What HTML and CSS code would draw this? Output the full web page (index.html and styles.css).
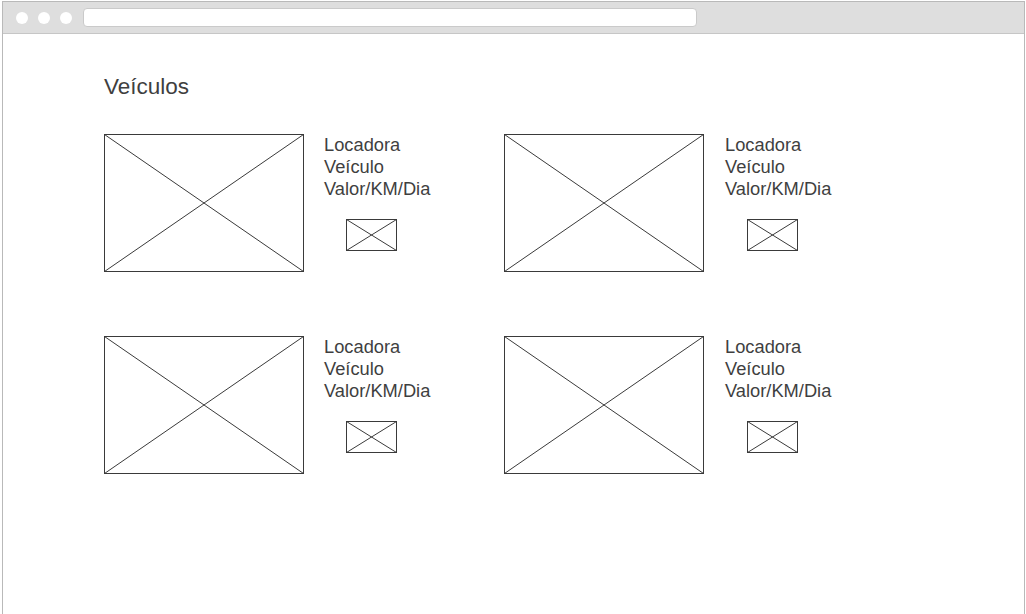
FILE: index.html
```html
<!DOCTYPE html>
<html lang="pt">
<head>
<meta charset="utf-8">
<title>Veículos</title>
<link rel="stylesheet" href="styles.css">
</head>
<body>
<div class="window">
  <div class="chrome">
    <span class="dot"></span><span class="dot"></span><span class="dot"></span>
    <div class="address"></div>
  </div>
  <main class="content">
    <h1 class="title">Veículos</h1>
    <div class="grid">
      <div class="card">
        <svg class="ph-big" width="200" height="138" viewBox="0 0 200 138"><rect x="0.5" y="0.5" width="199" height="137"/><line x1="0.5" y1="0.5" x2="199.5" y2="137.5"/><line x1="199.5" y1="0.5" x2="0.5" y2="137.5"/></svg>
        <div class="info">
          <div class="line">Locadora</div>
          <div class="line">Veículo</div>
          <div class="line">Valor/KM/Dia</div>
          <svg class="ph-small" width="51" height="32" viewBox="0 0 51 32"><rect x="0.5" y="0.5" width="50" height="31"/><line x1="0.5" y1="0.5" x2="50.5" y2="31.5"/><line x1="50.5" y1="0.5" x2="0.5" y2="31.5"/></svg>
        </div>
      </div>
      <div class="card card-right">
        <svg class="ph-big" width="200" height="138" viewBox="0 0 200 138"><rect x="0.5" y="0.5" width="199" height="137"/><line x1="0.5" y1="0.5" x2="199.5" y2="137.5"/><line x1="199.5" y1="0.5" x2="0.5" y2="137.5"/></svg>
        <div class="info">
          <div class="line">Locadora</div>
          <div class="line">Veículo</div>
          <div class="line">Valor/KM/Dia</div>
          <svg class="ph-small" width="51" height="32" viewBox="0 0 51 32"><rect x="0.5" y="0.5" width="50" height="31"/><line x1="0.5" y1="0.5" x2="50.5" y2="31.5"/><line x1="50.5" y1="0.5" x2="0.5" y2="31.5"/></svg>
        </div>
      </div>
      <div class="card">
        <svg class="ph-big" width="200" height="138" viewBox="0 0 200 138"><rect x="0.5" y="0.5" width="199" height="137"/><line x1="0.5" y1="0.5" x2="199.5" y2="137.5"/><line x1="199.5" y1="0.5" x2="0.5" y2="137.5"/></svg>
        <div class="info">
          <div class="line">Locadora</div>
          <div class="line">Veículo</div>
          <div class="line">Valor/KM/Dia</div>
          <svg class="ph-small" width="51" height="32" viewBox="0 0 51 32"><rect x="0.5" y="0.5" width="50" height="31"/><line x1="0.5" y1="0.5" x2="50.5" y2="31.5"/><line x1="50.5" y1="0.5" x2="0.5" y2="31.5"/></svg>
        </div>
      </div>
      <div class="card card-right">
        <svg class="ph-big" width="200" height="138" viewBox="0 0 200 138"><rect x="0.5" y="0.5" width="199" height="137"/><line x1="0.5" y1="0.5" x2="199.5" y2="137.5"/><line x1="199.5" y1="0.5" x2="0.5" y2="137.5"/></svg>
        <div class="info">
          <div class="line">Locadora</div>
          <div class="line">Veículo</div>
          <div class="line">Valor/KM/Dia</div>
          <svg class="ph-small" width="51" height="32" viewBox="0 0 51 32"><rect x="0.5" y="0.5" width="50" height="31"/><line x1="0.5" y1="0.5" x2="50.5" y2="31.5"/><line x1="50.5" y1="0.5" x2="0.5" y2="31.5"/></svg>
        </div>
      </div>
    </div>
  </main>
</div>
</body>
</html>
```

FILE: styles.css
```css
html, body {
  margin: 0;
  padding: 0;
  height: 100%;
  background: #ffffff;
}
body {
  font-family: "Liberation Sans", Arial, sans-serif;
  color: #3f3f3f;
}
.window {
  box-sizing: border-box;
  margin: 1px 1px 0 2px;
  height: calc(100% - 1px);
  border: 1px solid #b9b9b9;
  border-bottom: none;
  display: flex;
  flex-direction: column;
}
.chrome {
  box-sizing: border-box;
  height: 32px;
  background: #dedede;
  border-bottom: 1px solid #c6c6c6;
  display: flex;
  align-items: center;
  padding-left: 13px;
}
.dot {
  width: 12px;
  height: 12px;
  border-radius: 50%;
  background: #ffffff;
  margin-right: 10px;
}
.address {
  margin-left: 1px;
  width: 614px;
  height: 19px;
  background: #ffffff;
  border: 1px solid #cacaca;
  border-radius: 4px;
  box-sizing: border-box;
}
.content {
  padding: 40px 0 0 101px;
}
.title {
  margin: 0;
  font-weight: normal;
  font-size: 22.5px;
  line-height: 26px;
  color: #3f3f3f;
}
.grid {
  margin-top: 34px;
  display: grid;
  grid-template-columns: 400px 400px;
  row-gap: 64px;
}
.card {
  display: flex;
  align-items: flex-start;
}
.ph-big, .ph-small {
  display: block;
  fill: none;
  stroke: #3a3a3a;
  stroke-width: 1;
}
.info {
  margin-left: 20px;
  font-size: 18.3px;
  line-height: 22px;
}
.card-right .info {
  margin-left: 21px;
}
.ph-small {
  margin: 19px 0 0 22px;
}
```
